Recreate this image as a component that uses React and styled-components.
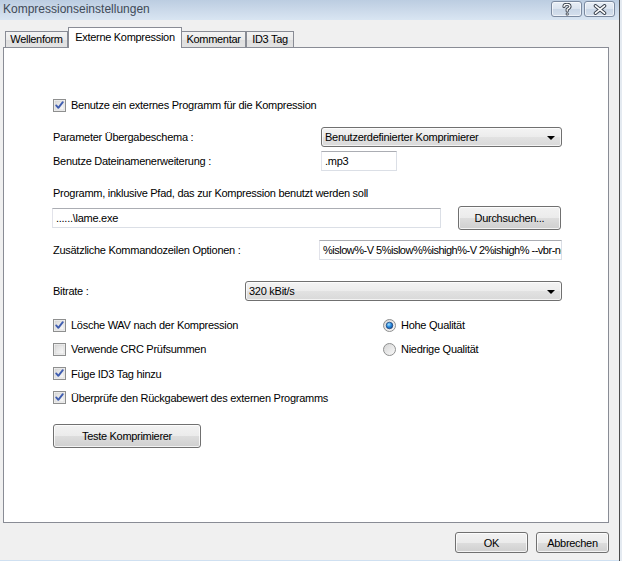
import React from "react";
import styled, { createGlobalStyle } from "styled-components";

const Global = createGlobalStyle`
  html, body { margin: 0; padding: 0; background: #e6ebf1; }
  body { font-family: "Liberation Sans", Arial, sans-serif; font-size: 11px; color: #000; }
  * { box-sizing: border-box; }
`;

const Screen = styled.div`
  width: 622px;
  height: 561px;
  display: flex;
  overflow: hidden;
  background: #e4eaf1;
`;

const Window = styled.div`
  width: 620px;
  height: 561px;
  flex: none;
  display: flex;
  flex-direction: column;
  border-right: 1px solid #4a4a4a;
  background: #e3e6ea;
`;

const TitleBar = styled.div`
  height: 20px;
  flex: none;
  display: flex;
  align-items: flex-start;
  justify-content: space-between;
  padding: 1px 4px 0 3px;
  background: linear-gradient(#bccde1, #d9e5f2);
`;

const Title = styled.div`
  font-family: "Liberation Sans", Arial, sans-serif;
  font-size: 12px;
  line-height: 17px;
  color: #3f4a57;
`;

const CaptionButtons = styled.div`
  display: flex;
  gap: 2px;
`;

const CaptionButton = styled.div`
  width: 31px;
  height: 16px;
  border: 1px solid #7b8aa0;
  border-radius: 3px;
  background: linear-gradient(#e8eef6 0%, #dbe4ef 50%, #c9d6e6 51%, #d5e0ed 100%);
  box-shadow: inset 0 0 0 1px rgba(255, 255, 255, 0.6);
  display: flex;
  align-items: center;
  justify-content: center;
`;

const Body = styled.div`
  flex: 1;
  display: flex;
  flex-direction: column;
  background: #f0f0f0;
  padding: 7px 10px 0 3px;
  border-bottom: 1px solid #cfe0f1;
`;

const TabStrip = styled.div`
  height: 20px;
  display: flex;
  align-items: flex-end;
  padding-left: 2px;
`;

const Tab = styled.div`
  width: ${(p) => p.$w}px;
  height: ${(p) => (p.$active ? 21 : 16)}px;
  margin-bottom: ${(p) => (p.$active ? -1 : 0)}px;
  position: relative;
  z-index: ${(p) => (p.$active ? 2 : 0)};
  border: 1px solid #898c95;
  border-bottom: none;
  border-left-width: ${(p) => (p.$noLeft ? 0 : 1)}px;
  background: ${(p) =>
    p.$active ? "#ffffff" : "linear-gradient(#f3f3f3 0%, #ebebeb 50%, #dedede 51%, #e3e3e3 100%)"};
  display: flex;
  justify-content: center;
  padding-top: ${(p) => (p.$active ? 3 : 1)}px;
  font-size: 11px;
  letter-spacing: -0.3px;
  line-height: 13px;
  white-space: nowrap;
`;

const Panel = styled.div`
  height: 476px;
  flex: none;
  border: 1px solid #898c95;
  background: #ffffff;
  padding: 49px 0 0 49px;
  display: flex;
  flex-direction: column;
`;

const Content = styled.div`
  width: 509px;
  display: flex;
  flex-direction: column;
  letter-spacing: -0.27px;
  font-size: 11px;
`;

const CheckRow = styled.label`
  height: 16px;
  display: flex;
  align-items: center;
  gap: 5px;
  white-space: nowrap;
  margin-top: ${(p) => p.$mt || 0}px;
`;

const FieldRow = styled.div`
  display: flex;
  align-items: center;
  margin-top: ${(p) => p.$mt || 0}px;
  white-space: nowrap;
`;

const FieldLabel = styled.span`
  width: ${(p) => p.$w}px;
  flex: none;
`;

const TextLine = styled.div`
  height: 14px;
  line-height: 14px;
  margin-top: ${(p) => p.$mt || 0}px;
  white-space: nowrap;
`;

const TextBox = styled.div`
  width: ${(p) => p.$w}px;
  height: 20px;
  flex: none;
  margin-left: ${(p) => p.$ml || 0}px;
  border: 1px solid #dbdfe6;
  border-top-color: #abadb3;
  border-left-color: #e2e3ea;
  background: #fff;
  padding: 0 3px;
  line-height: 18px;
  overflow: hidden;
  white-space: nowrap;
  letter-spacing: ${(p) => (p.$tight ? "-0.5px" : "inherit")};
`;

const Combo = styled.div`
  width: ${(p) => p.$w}px;
  height: 20px;
  flex: none;
  border: 1px solid #707070;
  border-radius: 3px;
  background: linear-gradient(#f4f4f4 0%, #ececec 50%, #e2e2e2 51%, #d9d9d9 100%);
  box-shadow: inset 0 0 0 1px rgba(255, 255, 255, 0.7);
  display: flex;
  align-items: center;
  justify-content: space-between;
  padding: 0 6px 0 3px;
  white-space: nowrap;
`;

const Arrow = styled.span`
  width: 0;
  height: 0;
  border-left: 4px solid transparent;
  border-right: 4px solid transparent;
  border-top: 4px solid #000;
  margin-top: 1px;
`;

const PushButton = styled.div`
  width: ${(p) => p.$w}px;
  height: ${(p) => p.$h || 24}px;
  flex: none;
  margin-left: ${(p) => p.$ml || 0}px;
  margin-top: ${(p) => p.$mt || 0}px;
  border: 1px solid #707070;
  border-radius: 3px;
  background: linear-gradient(#f2f2f2 0%, #ebebeb 50%, #dddddd 51%, #cfcfcf 100%);
  box-shadow: inset 0 0 0 1px rgba(255, 255, 255, 0.75);
  display: flex;
  align-items: center;
  justify-content: center;
  white-space: nowrap;
  font-size: 11px;
  letter-spacing: -0.3px;
`;

const OptionsGrid = styled.div`
  margin-top: 16px;
  display: grid;
  grid-template-columns: 330px 1fr;
  grid-template-rows: repeat(4, 16px);
  row-gap: 8.3px;
`;

const PathRow = styled.div`
  display: flex;
  align-items: center;
  margin-top: 6px;
  height: 24px;
`;

const Footer = styled.div`
  display: flex;
  justify-content: flex-end;
  gap: 8px;
  margin-top: 9px;
`;

const BoxSvg = styled.svg`
  flex: none;
  display: block;
`;

function CheckBox({ checked }) {
  return (
    <BoxSvg width="13" height="13" viewBox="0 0 13 13">
      <defs>
        <linearGradient id="cbg" x1="0" y1="0" x2="1" y2="1">
          <stop offset="0" stopColor="#d9d9d9" />
          <stop offset="1" stopColor="#fbfbfb" />
        </linearGradient>
      </defs>
      <rect x="0.5" y="0.5" width="12" height="12" fill="#f4f4f4" stroke="#8e8f8f" />
      <rect x="2" y="2" width="9" height="9" fill="url(#cbg)" stroke="#cfcfcf" strokeWidth="0.6" />
      {checked && (
        <path
          d="M3.2 6.4 L5.3 8.8 L9.8 3.2"
          fill="none"
          stroke="#3f5db0"
          strokeWidth="1.9"
          strokeLinecap="round"
          strokeLinejoin="round"
        />
      )}
    </BoxSvg>
  );
}

function Radio({ checked }) {
  return (
    <BoxSvg width="13" height="13" viewBox="0 0 13 13">
      <defs>
        <linearGradient id="rbg" x1="0" y1="0" x2="1" y2="1">
          <stop offset="0" stopColor="#d4d4d4" />
          <stop offset="1" stopColor="#fafafa" />
        </linearGradient>
        <radialGradient id="rdot" cx="0.4" cy="0.35" r="0.7">
          <stop offset="0" stopColor="#a6e3ff" />
          <stop offset="0.5" stopColor="#2a8ce0" />
          <stop offset="1" stopColor="#0f4a96" />
        </radialGradient>
      </defs>
      <circle cx="6.5" cy="6.5" r="6" fill="url(#rbg)" stroke="#8e8f8f" />
      {checked && <circle cx="6.5" cy="6.5" r="3.3" fill="url(#rdot)" stroke="#1d3f72" strokeWidth="0.7" />}
    </BoxSvg>
  );
}

function CloseGlyph() {
  return (
    <svg width="14" height="11" viewBox="0 0 14 11">
      <path d="M2.5 1.8 L11.5 9.2 M11.5 1.8 L2.5 9.2" stroke="#3d4550" strokeWidth="3.6" strokeLinecap="round" />
      <path d="M2.5 1.8 L11.5 9.2 M11.5 1.8 L2.5 9.2" stroke="#ffffff" strokeWidth="1.6" strokeLinecap="round" />
    </svg>
  );
}

function HelpGlyph() {
  return (
    <svg width="10" height="13" viewBox="0 0 10 13">
      <path d="M2 3.6 Q2 1.3 5 1.3 Q8 1.3 8 3.6 Q8 5 5.2 6.3 L5.2 8" fill="none" stroke="#3d4550" strokeWidth="3.2" strokeLinecap="round" strokeLinejoin="round" />
      <circle cx="5.2" cy="11" r="1.6" fill="#3d4550" />
      <path d="M2 3.6 Q2 1.3 5 1.3 Q8 1.3 8 3.6 Q8 5 5.2 6.3 L5.2 8" fill="none" stroke="#ffffff" strokeWidth="1.3" strokeLinecap="round" strokeLinejoin="round" />
      <circle cx="5.2" cy="11" r="0.7" fill="#ffffff" />
    </svg>
  );
}

export default function App() {
  return (
    <>
      <Global />
      <Screen>
        <Window>
          <TitleBar>
            <Title>Kompressionseinstellungen</Title>
            <CaptionButtons>
              <CaptionButton>
                <HelpGlyph />
              </CaptionButton>
              <CaptionButton>
                <CloseGlyph />
              </CaptionButton>
            </CaptionButtons>
          </TitleBar>
          <Body>
            <TabStrip>
              <Tab $w={63}>Wellenform</Tab>
              <Tab $w={114} $active>
                Externe Kompression
              </Tab>
              <Tab $w={64} $noLeft>
                Kommentar
              </Tab>
              <Tab $w={48}>ID3 Tag</Tab>
            </TabStrip>
            <Panel>
              <Content>
                <CheckRow>
                  <CheckBox checked />
                  Benutze ein externes Programm für die Kompression
                </CheckRow>

                <FieldRow $mt={14}>
                  <FieldLabel $w={268}>Parameter Übergabeschema :</FieldLabel>
                  <Combo $w={241}>
                    Benutzerdefinierter Komprimierer
                    <Arrow />
                  </Combo>
                </FieldRow>

                <FieldRow $mt={4}>
                  <FieldLabel $w={268}>Benutze Dateinamenerweiterung :</FieldLabel>
                  <TextBox $w={76}>.mp3</TextBox>
                </FieldRow>

                <TextLine $mt={15}>Programm, inklusive Pfad, das zur Kompression benutzt werden soll</TextLine>

                <PathRow>
                  <TextBox $w={389} $ml={-1}>
                    ......\lame.exe
                  </TextBox>
                  <PushButton $w={103} $ml={17}>
                    Durchsuchen...
                  </PushButton>
                </PathRow>

                <FieldRow $mt={10}>
                  <FieldLabel $w={266}>Zusätzliche Kommandozeilen Optionen :</FieldLabel>
                  <TextBox $w={243} $tight>
                    %islow%-V 5%islow%%ishigh%-V 2%ishigh% --vbr-new
                  </TextBox>
                </FieldRow>

                <FieldRow $mt={21}>
                  <FieldLabel $w={192}>Bitrate :</FieldLabel>
                  <Combo $w={317}>
                    320 kBit/s
                    <Arrow />
                  </Combo>
                </FieldRow>

                <OptionsGrid>
                  <CheckRow>
                    <CheckBox checked />
                    Lösche WAV nach der Kompression
                  </CheckRow>
                  <CheckRow>
                    <Radio checked />
                    Hohe Qualität
                  </CheckRow>
                  <CheckRow>
                    <CheckBox />
                    Verwende CRC Prüfsummen
                  </CheckRow>
                  <CheckRow>
                    <Radio />
                    Niedrige Qualität
                  </CheckRow>
                  <CheckRow>
                    <CheckBox checked />
                    Füge ID3 Tag hinzu
                  </CheckRow>
                  <span />
                  <CheckRow>
                    <CheckBox checked />
                    Überprüfe den Rückgabewert des externen Programms
                  </CheckRow>
                  <span />
                </OptionsGrid>

                <PushButton $w={148} $mt={18}>
                  Teste Komprimierer
                </PushButton>
              </Content>
            </Panel>
            <Footer>
              <PushButton $w={73} $h={21}>
                OK
              </PushButton>
              <PushButton $w={73} $h={21}>
                Abbrechen
              </PushButton>
            </Footer>
          </Body>
        </Window>
      </Screen>
    </>
  );
}
